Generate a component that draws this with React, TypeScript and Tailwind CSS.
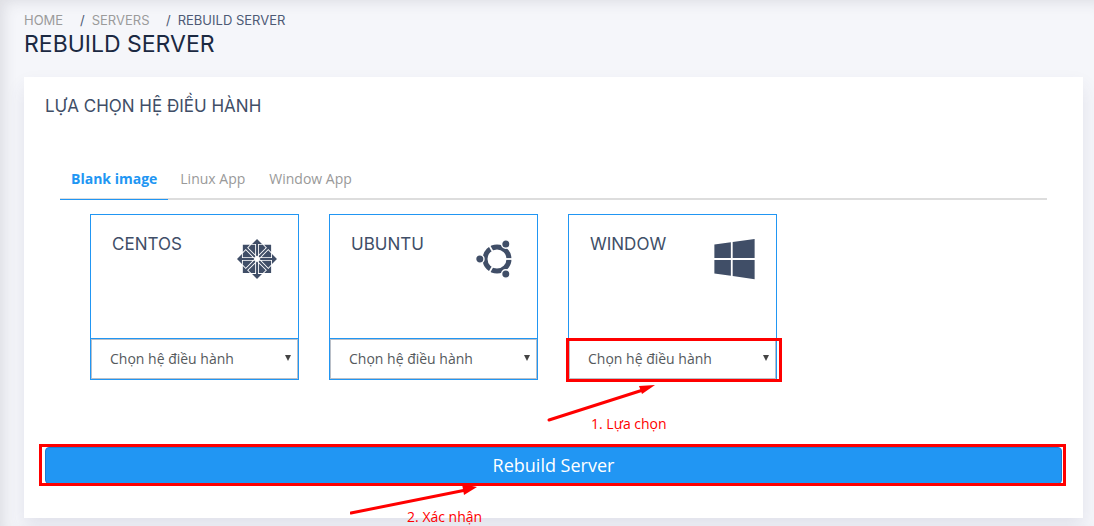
import React from "react";
import { FaCentos, FaWindows } from "react-icons/fa";

const headingFont = "font-['Inter','Liberation_Sans',sans-serif]";

function UbuntuIcon() {
  return (
    <svg viewBox="0 0 40 40" className="h-10 w-10" aria-hidden="true">
      <circle cx="21" cy="20" r="12" fill="none" stroke="currentColor" strokeWidth="5" />
      <g stroke="white" strokeWidth="1.8">
        <path d="M29 20H38" />
        <path d="M17 13.1L12.5 5.3" />
        <path d="M17 26.9L12.5 34.7" />
      </g>
      <g fill="currentColor" stroke="white" strokeWidth="1.4">
        <circle cx="3.8" cy="20" r="4.2" />
        <circle cx="29.8" cy="5" r="4.2" />
        <circle cx="29.8" cy="35" r="4.2" />
      </g>
    </svg>
  );
}

function Breadcrumb() {
  return (
    <nav aria-label="Breadcrumb" className={`${headingFont} text-[13px] leading-5 text-[#4d5a75]`}>
      <ol className="flex">
        <li className="w-14">
          <a href="#home" className="text-[#9b9b9b]">HOME</a>
        </li>
        <li className="flex w-[86px] gap-[7px]">
          <span>/</span>
          <a href="#servers" className="text-[#9b9b9b]">SERVERS</a>
        </li>
        <li className="flex gap-[7px]">
          <span>/</span>
          <span>REBUILD SERVER</span>
        </li>
      </ol>
    </nav>
  );
}

function Tabs() {
  return (
    <div role="tablist" className="flex border-b-2 border-[#dddddd] text-sm leading-5">
      <button role="tab" aria-selected="true" className="-mb-0.5 h-10 border-b border-[#2196f3] px-[11px] pb-0.5 font-bold text-[#2196f3]">
        Blank image
      </button>
      <button role="tab" aria-selected="false" className="h-[38px] px-3 text-[#999999]">
        Linux App
      </button>
      <button role="tab" aria-selected="false" className="h-[38px] px-3 text-[#999999]">
        Window App
      </button>
    </div>
  );
}

interface OsCardProps {
  id: string;
  name: string;
  icon: React.ReactNode;
  children?: React.ReactNode;
}

function OsCard({ id, name, icon, children }: OsCardProps) {
  return (
    <div className="relative border border-[#2196f3] text-[#404e67]">
      <div className="flex h-[123px] items-start justify-between pt-5 pr-[21px] pl-[21px]">
        <label htmlFor={id} className={`${headingFont} text-[17px] leading-[18px]`}>
          {name}
        </label>
        <span className="flex h-12 items-center">{icon}</span>
      </div>
      <div className="relative border-t border-[#2196f3]">
        <select
          id={id}
          className="block h-10 w-full appearance-none border border-[#babfc7] bg-white pr-8 pl-[18px] text-sm text-[#55595c]"
        >
          <option>Chọn hệ điều hành</option>
        </select>
        <svg viewBox="0 0 6 6" className="pointer-events-none absolute top-4 right-[7px] h-1.5 w-1.5 fill-[#444444]" aria-hidden="true">
          <path d="M0 0H6L3 6Z" />
        </svg>
      </div>
      {children}
    </div>
  );
}

export default function App() {
  return (
    <div className="min-h-screen bg-[#f5f6fa] pt-2.5 pr-[11px] pb-2 pl-6 font-['Open_Sans','Noto_Sans',sans-serif] shadow-[inset_8px_6px_14px_-4px_rgba(60,60,80,0.13)]">
      <header>
        <Breadcrumb />
        <h1 className={`${headingFont} text-[23px] leading-7 text-[#1b2942]`}>REBUILD SERVER</h1>
      </header>

      <main className="mt-[19px] bg-white px-[21px] pt-[19px] pb-[34px] shadow-[0_10px_18px_rgba(62,57,107,0.1)]">
        <h2 className={`${headingFont} text-[17px] leading-5 text-[#404e67]`}>LỰA CHỌN HỆ ĐIỀU HÀNH</h2>

        <div className="mt-11 mr-[15px] ml-[15px]">
          <Tabs />
          <div className="grid grid-cols-4 gap-[30px] pt-3.5 pr-[31px] pl-[30px]">
            <OsCard id="os-centos" name="CENTOS" icon={<FaCentos className="h-[46px] w-10" />} />
            <OsCard id="os-ubuntu" name="UBUNTU" icon={<UbuntuIcon />} />
            <OsCard id="os-window" name="WINDOW" icon={<FaWindows className="h-[46px] w-[41px]" />}>
              <div className="pointer-events-none absolute -right-1.5 -bottom-[3px] -left-[3px] h-11 border-3 border-[#ff0000]" />
              <div className="pointer-events-none absolute top-[167px] -left-6 text-[#ff0000]">
                <svg viewBox="0 0 112 44" className="h-11 w-28" aria-hidden="true">
                  <path d="M4 38L98 8" stroke="currentColor" strokeWidth="3" strokeLinecap="round" />
                  <path d="M94 4L110 3L97 12Z" fill="currentColor" />
                </svg>
                <span className="absolute top-8 left-[46px] text-sm whitespace-nowrap">1. Lựa chọn</span>
              </div>
            </OsCard>
          </div>
        </div>

        <div className="relative mt-[67px]">
          <button className="block h-[37px] w-full rounded border border-[#1c7cd5] bg-[#2196f3] pb-0.5 text-lg leading-6 text-white">
            Rebuild Server
          </button>
          <div className="pointer-events-none absolute -top-[3px] -right-1 -bottom-0.5 -left-1.5 border-3 border-[#ff0000]" />
          <div className="pointer-events-none absolute top-9 left-[30%] text-[#ff0000]">
            <svg viewBox="0 0 132 34" className="h-[34px] w-[132px]" aria-hidden="true">
              <path d="M1 30L116 7" stroke="currentColor" strokeWidth="3" strokeLinecap="round" />
              <path d="M112 1L127 4L114 12Z" fill="currentColor" />
            </svg>
            <span className="absolute top-6 left-[57px] text-sm whitespace-nowrap">2. Xác nhận</span>
          </div>
        </div>
      </main>
    </div>
  );
}
